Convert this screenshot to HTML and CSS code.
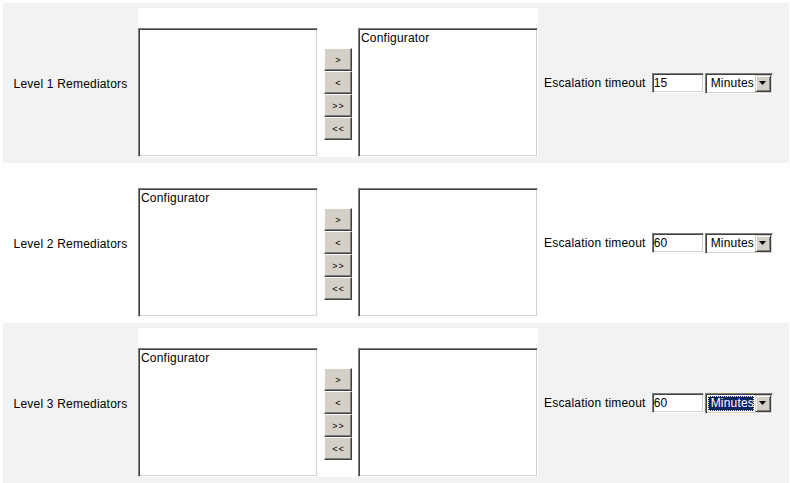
FILE: index.html
```html
<!DOCTYPE html>
<html>
<head>
<meta charset="utf-8">
<title>Remediators</title>
<link rel="stylesheet" href="styles.css">
</head>
<body>
<div class="page">
  <div class="row shaded">
    <div class="label">Level 1 Remediators</div>
    <div class="picker">
      <div class="lists">
        <div class="listbox" role="listbox"></div>
        <div class="movers">
          <button class="mv">&gt;</button>
          <button class="mv">&lt;</button>
          <button class="mv dbl">&gt;&gt;</button>
          <button class="mv dbl">&lt;&lt;</button>
        </div>
        <div class="listbox" role="listbox"><div class="opt">Configurator</div></div>
      </div>
    </div>
    <div class="escal">
      <span class="escal-text">Escalation timeout</span>
      <input class="num" type="text" value="15">
      <div class="dd"><span class="dd-val">Minutes</span><span class="dd-btn"><svg width="7" height="4" viewBox="0 0 7 4"><path d="M0 0h7L3.5 4z" fill="#000"/></svg></span></div>
    </div>
  </div>

  <div class="row">
    <div class="label">Level 2 Remediators</div>
    <div class="picker">
      <div class="lists">
        <div class="listbox" role="listbox"><div class="opt">Configurator</div></div>
        <div class="movers">
          <button class="mv">&gt;</button>
          <button class="mv">&lt;</button>
          <button class="mv dbl">&gt;&gt;</button>
          <button class="mv dbl">&lt;&lt;</button>
        </div>
        <div class="listbox" role="listbox"></div>
      </div>
    </div>
    <div class="escal">
      <span class="escal-text">Escalation timeout</span>
      <input class="num" type="text" value="60">
      <div class="dd"><span class="dd-val">Minutes</span><span class="dd-btn"><svg width="7" height="4" viewBox="0 0 7 4"><path d="M0 0h7L3.5 4z" fill="#000"/></svg></span></div>
    </div>
  </div>

  <div class="row shaded">
    <div class="label">Level 3 Remediators</div>
    <div class="picker">
      <div class="lists">
        <div class="listbox" role="listbox"><div class="opt">Configurator</div></div>
        <div class="movers">
          <button class="mv">&gt;</button>
          <button class="mv">&lt;</button>
          <button class="mv dbl">&gt;&gt;</button>
          <button class="mv dbl">&lt;&lt;</button>
        </div>
        <div class="listbox" role="listbox"></div>
      </div>
    </div>
    <div class="escal">
      <span class="escal-text">Escalation timeout</span>
      <input class="num" type="text" value="60">
      <div class="dd"><span class="dd-val focused">Minutes</span><span class="dd-btn"><svg width="7" height="4" viewBox="0 0 7 4"><path d="M0 0h7L3.5 4z" fill="#000"/></svg></span></div>
    </div>
  </div>
</div>
</body>
</html>
```

FILE: styles.css
```css
html, body {
  background: #fff;
}
body {
  margin: 3px 1px 0 3px;
  font-family: "Liberation Sans", Arial, sans-serif;
  font-size: 12px;
  letter-spacing: 0.2px;
  color: #000;
}
.row {
  display: flex;
  height: 160px;
}
.shaded {
  background: #f2f2f2;
}
.label {
  width: 135px;
  display: flex;
  align-items: center;
  justify-content: center;
  white-space: nowrap;
  padding-top: 1px;
  box-sizing: border-box;
}
.picker {
  width: 400px;
  background: #fff;
  margin: 5px 0 6px;
  padding-top: 20px;
  box-sizing: border-box;
}
.lists {
  display: flex;
  gap: 6px;
  height: 129px;
}
.listbox {
  width: 180px;
  height: 129px;
  box-sizing: border-box;
  background: #fff;
  border-top: 1px solid #808080;
  border-left: 1px solid #808080;
  border-right: 1px solid #fff;
  border-bottom: 1px solid #fff;
  box-shadow: inset 1px 1px 0 #404040, inset -1px -1px 0 #d4d0c8;
  padding: 2px 1px 1px 2px;
}
.opt {
  line-height: 14px;
  white-space: nowrap;
}
.movers {
  width: 28px;
  margin-top: 20px;
  display: flex;
  flex-direction: column;
}
.mv {
  width: 28px;
  height: 23px;
  margin: 0;
  padding: 0;
  box-sizing: border-box;
  background: #d4d0c8;
  border-top: 1px solid #fff;
  border-left: 1px solid #fff;
  border-right: 1px solid #404040;
  border-bottom: 1px solid #404040;
  box-shadow: inset -1px -1px 0 #808080;
  font-family: "Liberation Sans", Arial, sans-serif;
  font-size: 9px;
  line-height: 10px;
  letter-spacing: 0;
  color: #000;
}
.dbl {
  letter-spacing: 1px;
  text-indent: 1px;
}
.escal {
  flex: 1;
  display: flex;
  align-items: center;
  padding-left: 6px;
  white-space: nowrap;
}
.num {
  width: 52px;
  height: 20px;
  margin: 0 0 0 6px;
  box-sizing: border-box;
  padding: 0 1px;
  font-family: "Liberation Sans", Arial, sans-serif;
  font-size: 12px;
  letter-spacing: 0.2px;
  color: #000;
  background: #fff;
  border-top: 1px solid #808080;
  border-left: 1px solid #808080;
  border-right: 1px solid #fff;
  border-bottom: 1px solid #fff;
  box-shadow: inset 1px 1px 0 #404040, inset -1px -1px 0 #d4d0c8;
  outline: none;
}
.dd {
  margin-left: 1px;
  width: 68px;
  height: 21px;
  box-sizing: border-box;
  background: #fff;
  border-top: 1px solid #808080;
  border-left: 1px solid #808080;
  border-right: 1px solid #fff;
  border-bottom: 1px solid #fff;
  box-shadow: inset 1px 1px 0 #404040, inset -1px -1px 0 #d4d0c8;
  display: flex;
  align-items: center;
  padding: 1px;
}
.dd-val {
  flex: 1;
  height: 15px;
  line-height: 15px;
  padding-left: 3px;
  margin-left: 1px;
}
.dd-val.focused {
  background: #0a246a;
  color: #fff;
  outline: 1px dotted #ffffa0;
  outline-offset: -1px;
}
.dd-btn {
  width: 16px;
  height: 17px;
  box-sizing: border-box;
  background: #d4d0c8;
  border-top: 1px solid #d4d0c8;
  border-left: 1px solid #d4d0c8;
  border-right: 1px solid #404040;
  border-bottom: 1px solid #404040;
  box-shadow: inset 1px 1px 0 #fff, inset -1px -1px 0 #808080;
  display: flex;
  align-items: center;
  justify-content: center;
  margin-left: 1px;
}
.dd-btn svg {
  display: block;
}
```
